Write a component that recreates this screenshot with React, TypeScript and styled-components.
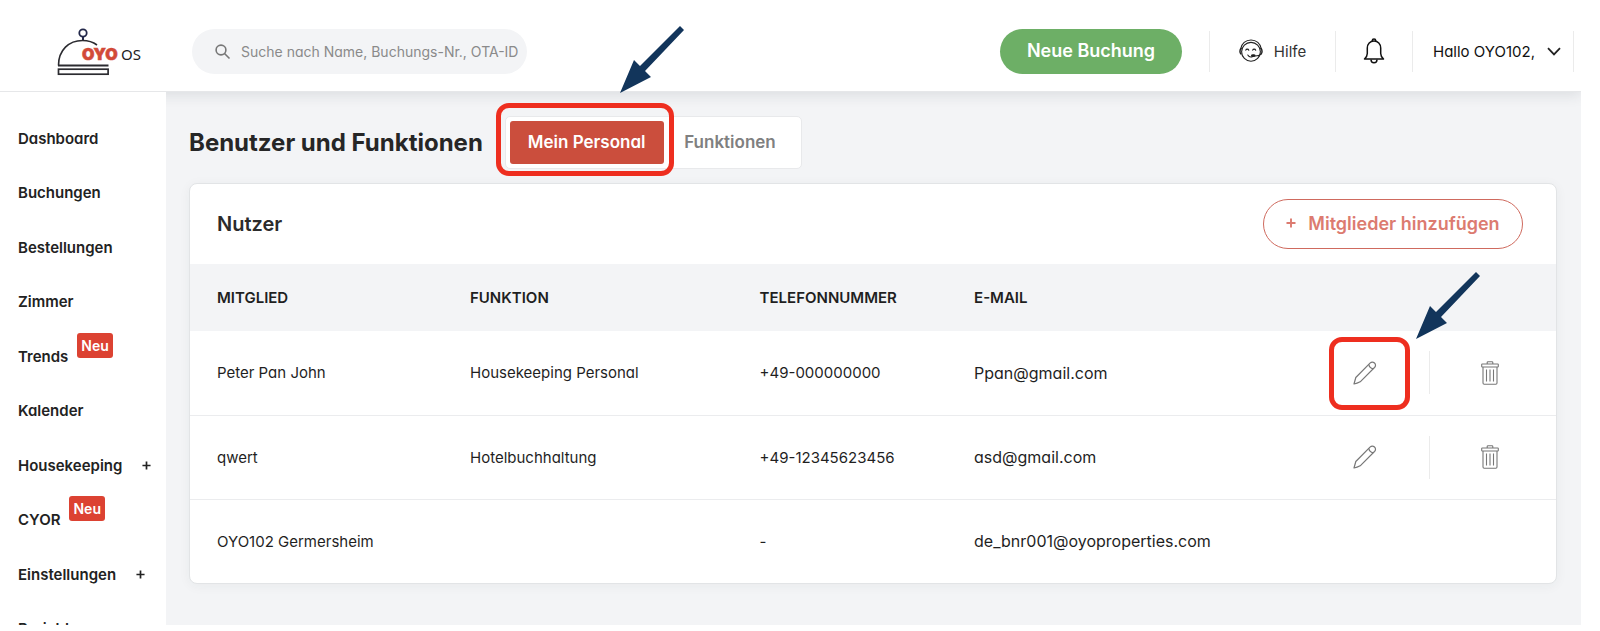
import React from 'react';
import styled, { createGlobalStyle } from 'styled-components';

const GlobalStyle = createGlobalStyle`
  *, *::before, *::after { box-sizing: border-box; }
  body {
    margin: 0;
    background: #fff;
    color: #1f1f1f;
    font-family: Inter, "Open Sans", sans-serif;
    font-feature-settings: "cv11";
    font-size: 16px;
  }
  button, input { font: inherit; font-feature-settings: inherit; color: inherit; }
  a { color: inherit; text-decoration: none; }
`;

const Shell = styled.div`
  display: flex;
  flex-direction: column;
  height: 100vh;
  padding: 0 19px 6px 0;
`;

const Header = styled.header`
  position: relative;
  z-index: 1;
  flex: none;
  display: flex;
  align-items: center;
  height: 92px;
  padding: 11px 7px 0 56px;
  background: #fff;
  border-bottom: 1px solid #e6e7e9;
  box-shadow: 0 4px 12px rgba(40, 50, 60, 0.1);
  clip-path: inset(0 0 -20px 0);
`;

const LogoLink = styled.a`
  display: block;
  width: 88px;
  height: 49px;
  margin-right: 48px;
`;

const SearchBox = styled.label`
  display: flex;
  align-items: center;
  gap: 10px;
  width: 335px;
  height: 45px;
  padding: 0 4px 0 22px;
  border-radius: 23px;
  background: #f3f4f6;
  color: #808080;
`;

const SearchInput = styled.input`
  flex: 1;
  min-width: 0;
  padding: 0;
  border: 0;
  outline: 0;
  background: none;
  font-size: 14px;
  &::placeholder { color: #8a8a8a; opacity: 1; }
`;

const PrimaryButton = styled.button`
  width: 182px;
  height: 45px;
  margin: 0 27px 0 auto;
  padding: 0 0 2px;
  border: 0;
  border-radius: 23px;
  background: #6daf66;
  color: #fff;
  font-size: 18px;
  font-weight: 600;
`;

const HeaderItem = styled.button<{ $width: number; $last?: boolean }>`
  display: flex;
  align-items: center;
  justify-content: center;
  gap: ${(p) => (p.$last ? '12px' : '11px')};
  width: ${(p) => p.$width}px;
  height: 41px;
  padding: ${(p) => (p.$last ? '0 0 0 8px' : '0')};
  border: 0;
  border-left: 1px solid #ebebeb;
  border-right: ${(p) => (p.$last ? '1px solid #ebebeb' : '0')};
  background: none;
  color: ${(p) => (p.$last ? '#111' : '#333')};
  font-size: 15px;
`;

const Body = styled.div`
  flex: 1;
  min-height: 0;
  display: flex;
`;

const Sidebar = styled.nav`
  position: relative;
  z-index: 2;
  flex: none;
  width: 166px;
  overflow: hidden;
  background: #fff;
`;

const NavList = styled.ul`
  margin: 0;
  padding: 19px 0 0 18px;
  list-style: none;
`;

const NavItem = styled.li`
  display: flex;
  align-items: center;
  height: 54px;
  font-size: 15px;
  font-weight: 600;
  color: #222;
  &:nth-child(even) { height: 55px; }
`;

const NewBadge = styled.span`
  align-self: flex-start;
  margin: 4px 0 0 9px;
  padding: 0 4px;
  border-radius: 3px;
  background: #dc4232;
  color: #fff;
  font-size: 14px;
  font-weight: 600;
  line-height: 25px;
`;

const ExpandButton = styled.button`
  display: flex;
  margin-left: 20px;
  padding: 0;
  border: 0;
  background: none;
`;

const Main = styled.main`
  flex: 1;
  min-width: 0;
  padding: 24px 24px 0 23px;
  background: #f3f4f6;
`;

const TitleRow = styled.div`
  display: flex;
  align-items: center;
  gap: 22px;
  margin-bottom: 14px;
`;

const Title = styled.h1`
  margin: 0;
  font-size: 24px;
  line-height: 32px;
  font-weight: 700;
  color: #262626;
`;

const Tabs = styled.div`
  display: flex;
  padding: 4px;
  border: 1px solid #e8e9eb;
  border-radius: 5px;
  background: #fff;
`;

const TabSlot = styled.div`
  position: relative;
`;

const Tab = styled.button<{ $active?: boolean }>`
  min-width: 133px;
  height: 43px;
  padding: 0 18px 2px;
  border: 0;
  border-radius: 3px;
  background: ${(p) => (p.$active ? '#cb4e3d' : 'none')};
  color: ${(p) => (p.$active ? '#fff' : '#808080')};
  font-size: 17px;
  font-weight: 600;
`;

const Card = styled.section`
  border: 1px solid #e2e4e6;
  border-radius: 8px;
  background: #fff;
  box-shadow: 0 2px 12px rgba(40, 50, 60, 0.05);
`;

const CardHeader = styled.div`
  display: flex;
  align-items: center;
  justify-content: space-between;
  height: 80px;
  padding: 0 33px 0 27px;
`;

const CardTitle = styled.h2`
  margin: 0;
  font-size: 20px;
  font-weight: 600;
  color: #2b2b2b;
`;

const AddButton = styled.button`
  display: flex;
  align-items: center;
  justify-content: center;
  gap: 12px;
  width: 260px;
  height: 50px;
  padding: 0 0 2px;
  border: 1px solid #cf6a5e;
  border-radius: 25px;
  background: #fff;
  color: #dc7b70;
  font-size: 18px;
  font-weight: 600;
`;

const Table = styled.table`
  width: 100%;
  table-layout: fixed;
  border-collapse: collapse;
`;

const HeadCell = styled.th<{ $width: string }>`
  width: ${(p) => p.$width};
  height: 67px;
  padding: 0;
  background: #f3f4f6;
  text-align: left;
  font-size: 15px;
  font-weight: 600;
  &:first-child { padding-left: 27px; }
`;

const Row = styled.tr`
  & + & { border-top: 1px solid #ebecee; }
`;

const Cell = styled.td<{ $large?: boolean }>`
  height: 84px;
  padding: 0;
  color: #1f1f1f;
  font-size: ${(p) => (p.$large ? '16px' : '15px')};
  &:first-child { padding-left: 27px; }
`;

const ActionSlot = styled.div<{ $divided?: boolean }>`
  position: relative;
  display: flex;
  align-items: center;
  justify-content: center;
  height: 43px;
  padding-right: ${(p) => (p.$divided ? '6px' : '0')};
  border-left: ${(p) => (p.$divided ? '1px solid #ebebeb' : '0')};
`;

const IconButton = styled.button`
  display: flex;
  padding: 0;
  border: 0;
  background: none;
  color: #777;
`;

const Highlight = styled.span<{ $inset: string }>`
  position: absolute;
  inset: ${(p) => p.$inset};
  z-index: 3;
  border: 5px solid #ee2e1f;
  border-radius: 13px;
  pointer-events: none;
`;

const Pointer = styled.svg`
  position: absolute;
  left: calc(100% - 50px);
  bottom: calc(100% + 14px);
  width: 66px;
  height: 68px;
  overflow: visible;
`;

const TablePointer = styled(Pointer)`
  left: calc(100% + 10px);
  bottom: calc(100% + 2px);
`;

const arrowShape = <path d="M1 67 15 34 21 40 61 0 65 4 26 45 32 51Z" fill="#12355b" />;

const Logo = () => (
  <svg width="88" height="49" viewBox="0 0 88 49" fill="none">
    <circle cx="27" cy="6" r="3.7" stroke="#23284a" strokeWidth="1.8" />
    <path d="M27 10v4" stroke="#23284a" strokeWidth="2" />
    <path d="M2.5 38.5C2.5 23 13 13.5 26.500 13.500c6 0 10.500 1.500 14.500 4.500" stroke="#2b2b30" strokeWidth="1.6" />
    <path d="M2 38.500h50.500" stroke="#2b2b30" strokeWidth="1.800" />
    <rect x="2.500" y="42.200" width="49.600" height="5" stroke="#2b2b30" strokeWidth="1.700" />
    <text x="26" y="33" fontSize="16" fontWeight="900" fill="#d24a38" stroke="#d24a38" strokeWidth="0.600">OYO</text>
    <text x="65" y="33" fontSize="15" fontFamily="Noto Sans, sans-serif" fill="#222">OS</text>
  </svg>
);

const SearchIcon = () => (
  <svg width="17" height="17" viewBox="0 0 17 17" fill="none" stroke="#777" strokeWidth="1.600">
    <circle cx="7" cy="7" r="4.900" />
    <path d="m10.500 10.500 5 5" />
  </svg>
);

const HelpIcon = () => (
  <svg width="24" height="24" viewBox="0 0 24 24" fill="none" stroke="#222" strokeWidth="1.100" strokeLinecap="round">
    <circle cx="12" cy="12.800" r="9.400" />
    <path d="M1.600 10C2.500 4.500 6.800 1 12 1s9.500 3.500 10.400 9" />
    <path d="M2.200 9.500C.6 10.200.6 14.300 2 15M21.800 9.500c1.600.7 1.600 4.800.2 5.500" strokeWidth="1.500" />
    <path d="M6.800 11.200c.4-1.400 2.500-1.400 3 0M13.700 11.200c.4-1.400 2.500-1.400 3 0" />
    <path d="M8.800 16c1 1.700 3.200 2.300 5 1.500M22 15.200c-1.500 1.500-4 2-7 1.800" />
    <ellipse cx="14.300" cy="16.600" rx="1.800" ry=".9" fill="#222" />
  </svg>
);

const BellIcon = () => (
  <svg width="22" height="26" viewBox="0 0 22 26" fill="none" stroke="#111" strokeWidth="1.500" strokeLinejoin="round">
    <path d="M9.300 3.200V2.400C9.300 1.500 10 1 11 1s1.700.5 1.700 1.400v.8" />
    <path d="M4.300 15.500V10c0-4 2.800-7 6.700-7s6.700 3 6.700 7v5.500c0 2.500 1 3.800 2.800 5.500h-19c1.800-1.700 2.800-3 2.800-5.500Z" />
    <path d="M8 21.500c0 2 1.200 3.300 3 3.300s3-1.300 3-3.300" />
  </svg>
);

const ChevronIcon = () => (
  <svg width="14" height="9" viewBox="0 0 14 9" fill="none" stroke="#222" strokeWidth="1.800">
    <path d="m1 1.200 6 6.200 6-6.200" />
  </svg>
);

const PlusIcon = ({ size }: { size: number }) => (
  <svg width={size} height={size} viewBox="0 0 10 10" stroke="currentColor" strokeWidth="1.900">
    <path d="M5 .5v9M.5 5h9" />
  </svg>
);

const PencilIcon = () => (
  <svg width="24" height="24" viewBox="0 0 24 24" fill="none" stroke="currentColor" strokeWidth="1.200" strokeLinejoin="round">
    <path d="M1 23l1.800-6.500L17 2.100c1.500-1.400 3.300-1.200 4.500-.1 1.300 1.200 1.400 3 0 4.500L7.200 20.800Q4 22.500 1 23Z" />
    <path d="M15.800 3.400c.4 2.400 1.900 4 4.400 4.400" />
  </svg>
);

const TrashIcon = () => (
  <svg width="18" height="24" viewBox="0 0 18 24" fill="none" stroke="currentColor" strokeWidth="1.100">
    <path d="M6.200 3V1.500c0-.5.300-.8.800-.8h4c.5 0 .8.300.8.800V3" />
    <rect x=".7" y="3" width="16.600" height="3" rx=".6" />
    <path d="M2 6v16c0 .7.400 1.200 1.200 1.200h11.600c.8 0 1.200-.5 1.200-1.200V6M5.500 8.500v12M9 8.500v12M12.500 8.500v12" />
  </svg>
);

const navItems: { label: string; isNew?: boolean; expandable?: boolean }[] = [
  { label: 'Dashboard' },
  { label: 'Buchungen' },
  { label: 'Bestellungen' },
  { label: 'Zimmer' },
  { label: 'Trends', isNew: true },
  { label: 'Kalender' },
  { label: 'Housekeeping', expandable: true },
  { label: 'CYOR', isNew: true },
  { label: 'Einstellungen', expandable: true },
  { label: 'Berichte' },
];

const columns = [
  { label: 'MITGLIED', width: '20.5%' },
  { label: 'FUNKTION', width: '21.2%' },
  { label: 'TELEFONNUMMER', width: '15.7%' },
  { label: 'E-MAIL', width: '24%' },
  { label: '', width: '9.3%' },
  { label: '', width: '9.3%' },
];

const members = [
  { name: 'Peter Pan John', role: 'Housekeeping Personal', phone: '+49-000000000', mail: 'Ppan@gmail.com', editable: true, marked: true },
  { name: 'qwert', role: 'Hotelbuchhaltung', phone: '+49-12345623456', mail: 'asd@gmail.com', editable: true },
  { name: 'OYO102 Germersheim', role: '', phone: '-', mail: 'de_bnr001@oyoproperties.com' },
];

export default function App() {
  return (
    <Shell>
      <GlobalStyle />
      <Header>
        <LogoLink href="#" aria-label="OYO OS"><Logo /></LogoLink>
        <SearchBox>
          <SearchIcon />
          <SearchInput type="text" aria-label="Suche" placeholder="Suche nach Name, Buchungs-Nr., OTA-ID" />
        </SearchBox>
        <PrimaryButton>Neue Buchung</PrimaryButton>
        <HeaderItem $width={126}><HelpIcon />Hilfe</HeaderItem>
        <HeaderItem $width={77} aria-label="Benachrichtigungen"><BellIcon /></HeaderItem>
        <HeaderItem $width={162} $last>Hallo OYO102,<ChevronIcon /></HeaderItem>
      </Header>
      <Body>
        <Sidebar>
          <NavList>
            {navItems.map((item) => (
              <NavItem key={item.label}>
                <a href="#">{item.label}</a>
                {item.isNew && <NewBadge>Neu</NewBadge>}
                {item.expandable && (
                  <ExpandButton aria-label={`${item.label} öffnen`}><PlusIcon size={9} /></ExpandButton>
                )}
              </NavItem>
            ))}
          </NavList>
        </Sidebar>
        <Main>
          <TitleRow>
            <Title>Benutzer und Funktionen</Title>
            <Tabs>
              <TabSlot>
                <Tab $active>Mein Personal</Tab>
                <Highlight $inset="-18px -10px -12px -14px">
                  <Pointer viewBox="0 0 66 68">{arrowShape}</Pointer>
                </Highlight>
              </TabSlot>
              <Tab>Funktionen</Tab>
            </Tabs>
          </TitleRow>
          <Card>
            <CardHeader>
              <CardTitle>Nutzer</CardTitle>
              <AddButton><PlusIcon size={10} />Mitglieder hinzufügen</AddButton>
            </CardHeader>
            <Table>
              <thead>
                <tr>
                  {columns.map((c, i) => <HeadCell key={i} $width={c.width}>{c.label}</HeadCell>)}
                </tr>
              </thead>
              <tbody>
                {members.map((m) => (
                  <Row key={m.name}>
                    <Cell>{m.name}</Cell>
                    <Cell>{m.role}</Cell>
                    <Cell>{m.phone}</Cell>
                    <Cell $large>{m.mail}</Cell>
                    <Cell>
                      {m.editable && (
                        <ActionSlot>
                          <IconButton aria-label={`${m.name} bearbeiten`}><PencilIcon /></IconButton>
                          {m.marked && (
                            <Highlight $inset="-14px 19px -16px 27px">
                              <TablePointer viewBox="0 0 66 68">{arrowShape}</TablePointer>
                            </Highlight>
                          )}
                        </ActionSlot>
                      )}
                    </Cell>
                    <Cell>
                      {m.editable && (
                        <ActionSlot $divided>
                          <IconButton aria-label={`${m.name} löschen`}><TrashIcon /></IconButton>
                        </ActionSlot>
                      )}
                    </Cell>
                  </Row>
                ))}
              </tbody>
            </Table>
          </Card>
        </Main>
      </Body>
    </Shell>
  );
}
